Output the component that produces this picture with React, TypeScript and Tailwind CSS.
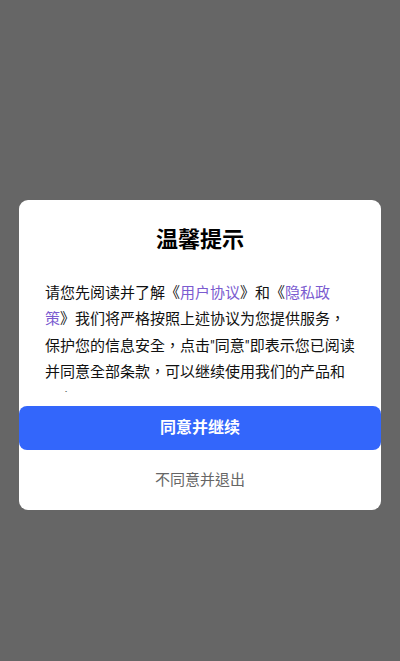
import React from "react";

export default function App() {
  return (
    <div
      className="min-h-[661px] w-[400px] bg-[#666666] pt-[200px]"
      style={{ fontFamily: 'Roboto, "Noto Sans CJK TC", sans-serif' }}
    >
      <div className="mx-[19px] flex flex-col rounded-[9px] bg-white">
        <h1 className="pt-[26px] text-center text-[22px] font-bold leading-[28px] text-black">
          温馨提示
        </h1>
        <div className="mt-[26px] h-[112px] overflow-hidden pl-[26px] pr-[24px] text-[15px] leading-[26.4px] text-[#111111] [text-spacing-trim:space-all]">
          请您先阅读并了解《<span className="text-[#7b5bd0]">用户协议</span>》和《<span className="text-[#7b5bd0]">隐私政策</span>》我们将严格按照上述协议为您提供服务，保护您的信息安全，点击{'"同意"'}即表示您已阅读并同意全部条款，可以继续使用我们的产品和服务。
        </div>
        <button className="mt-[14px] flex h-[44px] w-full items-center justify-center rounded-[8px] bg-[#3366fb] text-[16px] font-bold text-white">
          同意并继续
        </button>
        <button className="flex h-[60px] w-full items-center justify-center text-[15px] text-[#666666]">
          不同意并退出
        </button>
      </div>
    </div>
  );
}
